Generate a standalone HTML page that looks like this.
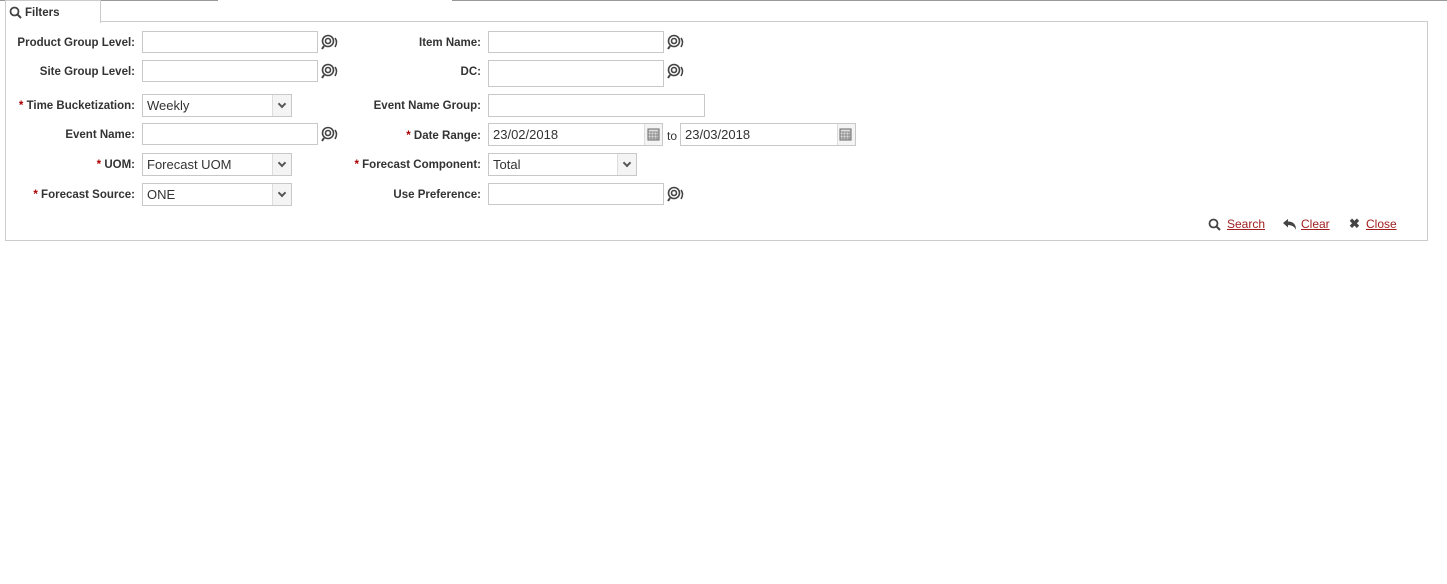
<!DOCTYPE html><html><head><style>
body{margin:0;width:1447px;height:584px;background:#fff;font-family:"Liberation Sans",sans-serif;position:relative;overflow:hidden}
.a{position:absolute}
.lbl{position:absolute;font-size:11.5px;font-weight:bold;color:#333;text-align:right;white-space:nowrap;margin-top:2px}
.r{color:#a00}
.in{position:absolute;border:1px solid #c8c8c8;background:#fff;box-sizing:border-box;font-size:13px;color:#333;padding:4px 4px 2px;line-height:14px}
.arr{position:absolute;right:0;top:0;bottom:0;width:18px;border-left:1px solid #ddd;background:#f4f4f4}
.arr:after{content:"";position:absolute;left:6px;top:6px;width:4px;height:4px;border-right:2px solid #555;border-bottom:2px solid #555;transform:rotate(45deg)}
.cal{position:absolute;right:0;top:0;bottom:0;width:17px;border-left:1px solid #ddd;background:#f4f4f4}
.lk{position:absolute;font-size:12px;color:#a02020;text-decoration:underline}
</style></head><body>
<div class="a" style="left:0;top:0;width:218px;height:1px;background:#999"></div>
<div class="a" style="left:452px;top:0;width:995px;height:1px;background:#999"></div>
<div class="a" style="left:5px;top:21px;width:1421px;height:218px;border:1px solid #ccc"></div>
<div class="a" style="left:5px;top:0;width:94px;height:22px;border:1px solid #ccc;border-bottom:none;background:#fff"></div>
<svg class="a" style="left:9px;top:6px" width="13" height="13" viewBox="0 0 13 13"><circle cx="5.5" cy="5.5" r="4" fill="none" stroke="#444" stroke-width="1.8"/><path d="M8.5 8.5L12 12" stroke="#444" stroke-width="2"/></svg>
<div class="lbl" style="left:25px;top:5px">Filters</div>

<div class="lbl" style="right:1312px;top:35px">Product Group Level:</div>
<div class="in" style="left:142px;top:31px;width:176px;height:22px"></div>
<div class="lbl" style="right:1312px;top:64px">Site Group Level:</div>
<div class="in" style="left:142px;top:60px;width:176px;height:22px"></div>
<div class="lbl" style="right:1312px;top:98px"><span class="r">*</span> Time Bucketization:</div>
<div class="in" style="left:142px;top:94px;width:150px;height:23px">Weekly<div class="arr"></div></div>
<div class="lbl" style="right:1312px;top:127px">Event Name:</div>
<div class="in" style="left:142px;top:123px;width:176px;height:22px"></div>
<div class="lbl" style="right:1312px;top:157px"><span class="r">*</span> UOM:</div>
<div class="in" style="left:142px;top:153px;width:150px;height:23px">Forecast UOM<div class="arr"></div></div>
<div class="lbl" style="right:1312px;top:187px"><span class="r">*</span> Forecast Source:</div>
<div class="in" style="left:142px;top:183px;width:150px;height:23px">ONE<div class="arr"></div></div>

<div class="lbl" style="right:966px;top:35px">Item Name:</div>
<div class="in" style="left:488px;top:31px;width:176px;height:22px"></div>
<div class="lbl" style="right:966px;top:64px">DC:</div>
<div class="in" style="left:488px;top:60px;width:176px;height:27px"></div>
<div class="lbl" style="right:966px;top:98px">Event Name Group:</div>
<div class="in" style="left:488px;top:94px;width:217px;height:23px"></div>
<div class="lbl" style="right:966px;top:128px"><span class="r">*</span> Date Range:</div>
<div class="in" style="left:488px;top:123px;width:175px;height:23px">23/02/2018<div class="cal"></div></div>
<div class="a" style="left:667px;top:129px;font-size:12px;color:#333">to</div>
<div class="in" style="left:680px;top:123px;width:176px;height:23px">23/03/2018<div class="cal"></div></div>
<div class="lbl" style="right:966px;top:157px"><span class="r">*</span> Forecast Component:</div>
<div class="in" style="left:488px;top:153px;width:149px;height:23px">Total<div class="arr"></div></div>
<div class="lbl" style="right:966px;top:187px">Use Preference:</div>
<div class="in" style="left:488px;top:183px;width:176px;height:22px"></div>

<svg width="0" height="0" style="position:absolute"><defs><g id="lu"><circle cx="7" cy="7" r="5.5" fill="none" stroke="#444" stroke-width="1.6"/><circle cx="7" cy="7" r="2.5" fill="none" stroke="#444" stroke-width="1.6"/><path d="M14 4Q17 8 14 13" fill="none" stroke="#444" stroke-width="1.6"/><path d="M3 12L1 15" stroke="#444" stroke-width="2"/></g>
<g id="ca"><rect x="1" y="2" width="11" height="11" fill="#ddd" stroke="#666"/><path d="M1 5h11M4 5v8M7 5v8M10 5v8M1 8h11M1 11h11" stroke="#777" stroke-width=".7"/></g></defs></svg>
<svg class="a" style="left:321px;top:34px" width="18" height="16"><use href="#lu"/></svg>
<svg class="a" style="left:321px;top:63px" width="18" height="16"><use href="#lu"/></svg>
<svg class="a" style="left:321px;top:126px" width="18" height="16"><use href="#lu"/></svg>
<svg class="a" style="left:667px;top:34px" width="18" height="16"><use href="#lu"/></svg>
<svg class="a" style="left:667px;top:63px" width="18" height="16"><use href="#lu"/></svg>
<svg class="a" style="left:667px;top:186px" width="18" height="16"><use href="#lu"/></svg>
<svg class="a" style="left:647px;top:127px" width="14" height="15"><use href="#ca"/></svg>
<svg class="a" style="left:839px;top:127px" width="14" height="15"><use href="#ca"/></svg>

<svg class="a" style="left:1208px;top:218px" width="14" height="14"><circle cx="5.5" cy="5.5" r="4" fill="none" stroke="#444" stroke-width="1.8"/><path d="M8.5 8.5L12 12" stroke="#444" stroke-width="2"/></svg>
<div class="lk" style="left:1227px;top:217px">Search</div>
<svg class="a" style="left:1282px;top:218px" width="16" height="14"><path d="M1 5L6 1V3.5Q14 3.5 14 12Q12 7 6 7V9.5Z" fill="#444"/></svg>
<div class="lk" style="left:1301px;top:217px">Clear</div>
<div class="a" style="left:1349px;top:216px;font-size:13px;font-weight:bold;color:#444">✖</div>
<div class="lk" style="left:1366px;top:217px">Close</div>
</body></html>
